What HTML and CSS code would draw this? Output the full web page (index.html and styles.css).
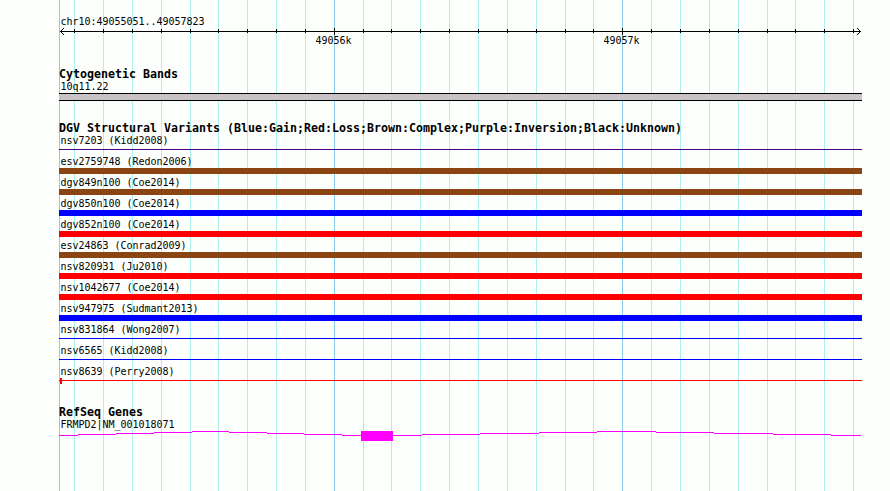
FILE: index.html
```
<!DOCTYPE html>
<html lang="en">
<head>
    <meta charset="UTF-8">
    <title>chr10:49055051..49057823</title>
    <link rel="stylesheet" href="styles.css">
</head>
<body>

    <div id="browser">
        <svg class="grid" width="890" height="491" shape-rendering="crispEdges">
            <path class="minor" d="M74.5 0v491M103.5 0v491M132.5 0v491M161.5 0v491M190.5 0v491M218.5 0v491M247.5 0v491M276.5 0v491M305.5 0v491M363.5 0v491M391.5 0v491M420.5 0v491M449.5 0v491M478.5 0v491M507.5 0v491M536.5 0v491M565.5 0v491M593.5 0v491M651.5 0v491M680.5 0v491M709.5 0v491M738.5 0v491M767.5 0v491M795.5 0v491M824.5 0v491M853.5 0v491"/>
            <path class="major" d="M59.5 0v491M334.5 0v491M622.5 0v491"/>
        </svg>

        <div class="ruler">
            <div class="label">chr10:49055051..49057823</div>
            <svg class="axis" width="803" height="22" viewBox="59 27 803 22">
                <g shape-rendering="crispEdges">
                    <path d="M60 31.5h801"/>
                    <path d="M74.5 29v4M103.5 29v4M132.5 29v4M161.5 29v4M190.5 29v4M218.5 29v4M247.5 29v4M276.5 29v4M305.5 29v4M363.5 29v4M391.5 29v4M420.5 29v4M449.5 29v4M478.5 29v4M507.5 29v4M536.5 29v4M565.5 29v4M593.5 29v4M651.5 29v4M680.5 29v4M709.5 29v4M738.5 29v4M767.5 29v4M795.5 29v4M824.5 29v4M853.5 29v4"/>
                    <path d="M334.5 28v7M622.5 28v7"/>
                    <path d="M61 30.5h1M62 29.5h1M63 28.5h1M61 32.5h1M62 33.5h1M63 34.5h1"/>
                    <path d="M859 30.5h1M858 29.5h1M857 28.5h1M859 32.5h1M858 33.5h1M857 34.5h1"/>
                </g>
                <text x="315.5" y="44">49056k</text>
                <text x="603.5" y="44">49057k</text>
            </svg>
        </div>

        <div class="track bands">
            <h2>Cytogenetic Bands</h2>
            <div class="label">10q11.22</div>
            <div class="band"></div>
        </div>

        <div class="track variants">
            <h2>DGV Structural Variants (Blue:Gain;Red:Loss;Brown:Complex;Purple:Inversion;Black:Unknown)</h2>
            <ul>
                <li><span class="label">nsv7203 (Kidd2008)</span><div class="thin inversion"></div></li>
                <li><span class="label">esv2759748 (Redon2006)</span><div class="bar complex"></div></li>
                <li><span class="label">dgv849n100 (Coe2014)</span><div class="bar complex"></div></li>
                <li><span class="label">dgv850n100 (Coe2014)</span><div class="bar gain"></div></li>
                <li><span class="label">dgv852n100 (Coe2014)</span><div class="bar loss"></div></li>
                <li><span class="label">esv24863 (Conrad2009)</span><div class="bar complex"></div></li>
                <li><span class="label">nsv820931 (Ju2010)</span><div class="bar loss"></div></li>
                <li><span class="label">nsv1042677 (Coe2014)</span><div class="bar loss"></div></li>
                <li><span class="label">nsv947975 (Sudmant2013)</span><div class="bar gain"></div></li>
                <li><span class="label">nsv831864 (Wong2007)</span><div class="thin gain"></div></li>
                <li><span class="label">nsv6565 (Kidd2008)</span><div class="thin gain"></div></li>
                <li><span class="label">nsv8639 (Perry2008)</span><div class="thin loss start"></div></li>
            </ul>
        </div>

        <div class="track genes">
            <h2>RefSeq Genes</h2>
            <div class="label">FRMPD2|NM_001018071</div>
            <svg class="gene" width="803" height="12" viewBox="59 430 803 12" shape-rendering="crispEdges">
                <path d="M59 435.5H78M78 434.5H116M116 433.5H154M154 432.5H192M192 431.5H229M229 432.5H267M267 433.5H304M304 434.5H342M342 435.5H361"/>
                <rect x="361" y="431" width="32" height="10"/>
                <path d="M393 435.5H422M422 434.5H480M480 433.5H539M539 432.5H597M597 431.5H656M656 432.5H714M714 433.5H773M773 434.5H831M831 435.5H861"/>
            </svg>
        </div>
    </div>

</body>
</html>
```
FILE: styles.css
```
*{
    margin: 0;
    padding: 0;
}
body{
    background-color: #fdfffc;
    overflow: hidden;
}
#browser{
    position: relative;
    box-sizing: border-box;
    width: 890px;
    height: 491px;
    padding: 15px 28px 0 59px;
    font-family: "DejaVu Sans Mono", "Liberation Mono", monospace;
    font-size: 10px;
    color: #000;
}
.grid{
    position: absolute;
    left: 0;
    top: 0;
    z-index: -1;
}
.minor{
    stroke: #afeeee;
}
.major{
    stroke: #87ceeb;
}
.label{
    display: block;
    height: 12px;
    padding-left: 1.4px;
    line-height: 14px;
    letter-spacing: -0.02px;
    white-space: nowrap;
}
.variants .label{
    line-height: 12px;
}
h2{
    height: 12px;
    font-size: 11.63px;
    line-height: 12px;
    font-weight: bold;
    white-space: nowrap;
}
svg{
    display: block;
}
.axis path{
    stroke: #000;
}
.axis text{
    letter-spacing: -0.02px;
}
.bands{
    padding-top: 19px;
}
.band{
    height: 6px;
    margin-top: 1px;
    border-top: 1px solid #000;
    border-bottom: 1px solid #000;
    background-color: #c8c3c6;
}
.variants{
    padding-top: 21px;
}
.variants ul{
    margin-top: 1px;
    list-style: none;
}
.variants li{
    height: 21px;
}
.bar{
    height: 6px;
}
.thin{
    position: relative;
    height: 1px;
    margin-top: 2px;
}
.gain{
    background-color: #0000ff;
}
.loss{
    background-color: #ff0000;
}
.complex{
    background-color: #8b4513;
}
.inversion{
    background-color: #4b0082;
}
.start:before{
    content: "";
    position: absolute;
    left: 1px;
    top: -2px;
    width: 2px;
    height: 6px;
    background-color: #ff0000;
}
.genes{
    padding-top: 19px;
}
.gene path{
    stroke: #ff00ff;
}
.gene rect{
    fill: #ff00ff;
}
```
